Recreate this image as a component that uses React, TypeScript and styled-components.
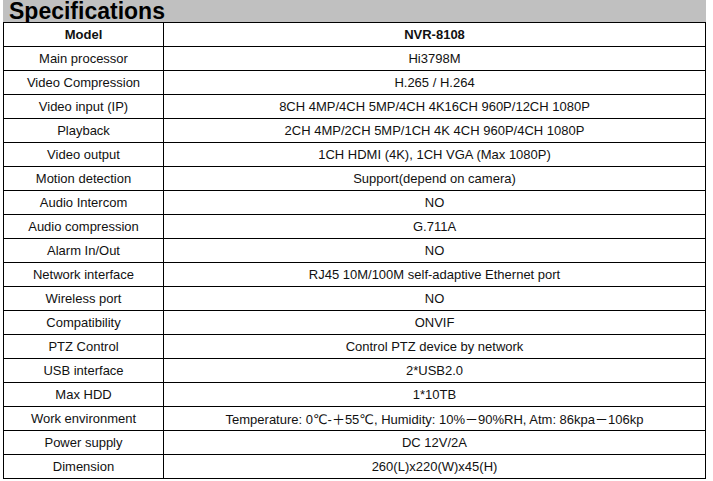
import React from "react";
import styled, { createGlobalStyle } from "styled-components";

const Global = createGlobalStyle`
  html, body { margin: 0; padding: 0; background: #ffffff; }
  body { font-family: "Liberation Sans", Arial, sans-serif; color: #000; }
`;

const Page = styled.div`
  padding-left: 3px;
  width: 703px;
`;

const TitleBar = styled.div`
  height: 22px;
  background: #c0c0c0;
  font-family: "Liberation Sans", Arial, sans-serif;
  font-weight: bold;
  font-size: 23px;
  line-height: 22px;
  padding-left: 6px;
  color: #000;
  white-space: nowrap;
  overflow: hidden;
`;

const Table = styled.div`
  border-left: 1px solid #000;
  border-right: 1px solid #000;
  border-bottom: 1px solid #000;
  box-sizing: border-box;
  width: 703px;
`;

const Row = styled.div`
  display: grid;
  grid-template-columns: 160px 1fr;
  height: 24px;
  border-top: 1px solid #000;
  box-sizing: border-box;
`;

const Cell = styled.div<{ $bold?: boolean; $first?: boolean }>`
  display: flex;
  align-items: center;
  justify-content: center;
  font-size: 13px;
  font-weight: ${(p) => (p.$bold ? "bold" : "normal")};
  font-family: "Liberation Sans", Arial, "DejaVu Sans", "Noto Sans CJK SC", sans-serif;
  color: #111;
  white-space: nowrap;
  border-right: ${(p) => (p.$first ? "1px solid #000" : "none")};
`;

const rows: [string, string][] = [
  ["Main processor", "Hi3798M"],
  ["Video Compression", "H.265 / H.264"],
  ["Video input (IP)", "8CH 4MP/4CH 5MP/4CH 4K16CH 960P/12CH 1080P"],
  ["Playback", "2CH 4MP/2CH 5MP/1CH 4K 4CH 960P/4CH 1080P"],
  ["Video output", "1CH HDMI (4K), 1CH VGA (Max 1080P)"],
  ["Motion detection", "Support(depend on camera)"],
  ["Audio Intercom", "NO"],
  ["Audio compression", "G.711A"],
  ["Alarm In/Out", "NO"],
  ["Network interface", "RJ45 10M/100M self-adaptive Ethernet port"],
  ["Wireless port", "NO"],
  ["Compatibility", "ONVIF"],
  ["PTZ Control", "Control PTZ device by network"],
  ["USB interface", "2*USB2.0"],
  ["Max HDD", "1*10TB"],
  [
    "Work environment",
    "Temperature: 0\u2103-\uFF0B55\u2103, Humidity: 10%\uFF0D90%RH, Atm: 86kpa\uFF0D106kp",
  ],
  ["Power supply", "DC 12V/2A"],
  ["Dimension", "260(L)x220(W)x45(H)"],
];

export default function App() {
  return (
    <Page>
      <Global />
      <TitleBar>Specifications</TitleBar>
      <Table>
        <Row>
          <Cell $first $bold>Model</Cell>
          <Cell $bold>NVR-8108</Cell>
        </Row>
        {rows.map(([k, v]) => (
          <Row key={k}>
            <Cell $first>{k}</Cell>
            <Cell>{v}</Cell>
          </Row>
        ))}
      </Table>
    </Page>
  );
}
